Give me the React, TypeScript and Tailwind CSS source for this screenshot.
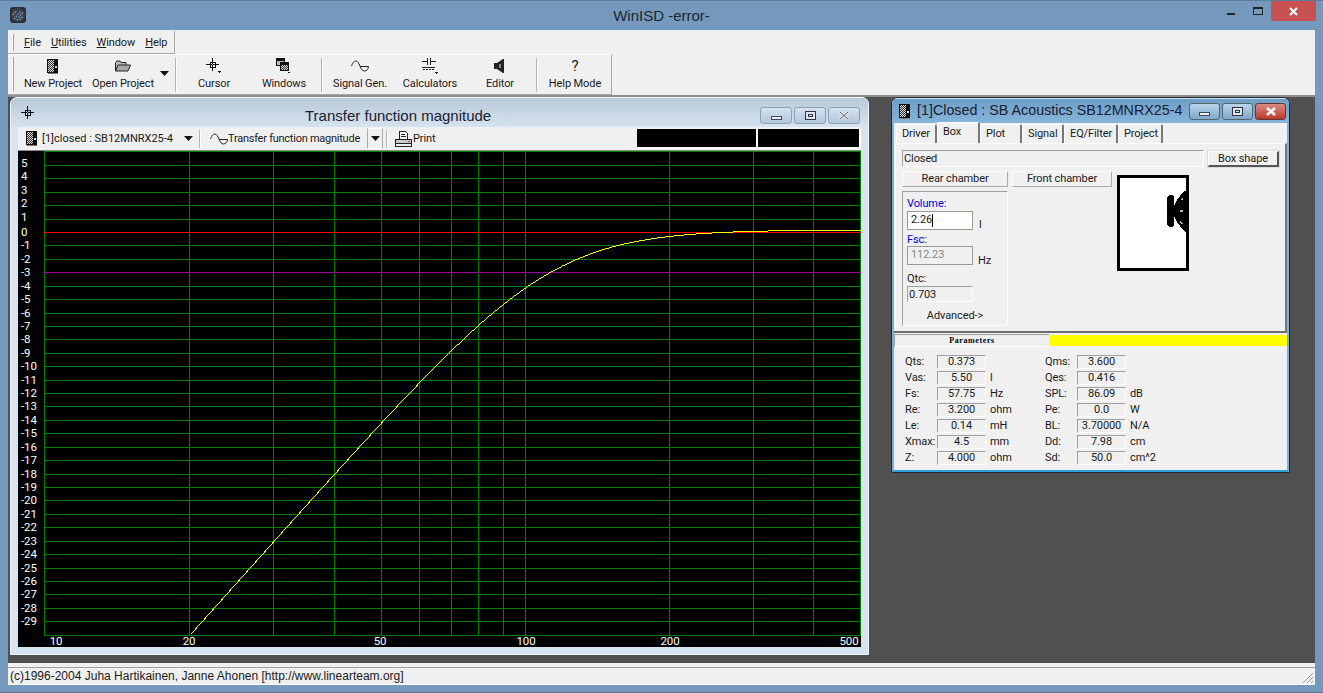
import React from "react";

const Dither = ({ id }: { id: string }) => (
  <pattern id={id} width="2" height="2" patternUnits="userSpaceOnUse">
    <rect width="2" height="2" fill="#d8d8d8" />
    <rect width="1" height="1" fill="#333" />
    <rect x="1" y="1" width="1" height="1" fill="#333" />
  </pattern>
);

const BoxIcon = ({ id }: { id: string }) => (
  <svg width="12" height="15" viewBox="0 0 12 15" shapeRendering="crispEdges">
    <defs><Dither id={id} /></defs>
    <rect x="0.5" y="0.5" width="10" height="13" fill={`url(#${id})`} stroke="#111" />
    <rect x="7" y="1" width="4" height="12" fill="#111" />
    <rect x="8" y="7" width="2" height="2" fill="#ddd" />
    <rect x="1" y="14" width="10" height="1" fill="#777" />
  </svg>
);

const FolderIcon = () => (
  <svg width="16" height="12" viewBox="0 0 16 12">
    <path d="M.5 11V2.500L2 1h3l1 1.500h5V5" fill="#bbb" stroke="#222" />
    <path d="M.5 11 3 5h12.500L13 11z" fill="#a9a9a9" stroke="#222" />
  </svg>
);

const Crosshair = ({ arrow }: { arrow?: boolean }) => (
  <svg width="16" height="16" viewBox="0 0 16 16" shapeRendering="crispEdges">
    <rect x="0" y="6" width="13" height="1" fill="#111" />
    <rect x="6" y="0" width="1" height="13" fill="#111" />
    <rect x="4" y="4" width="5" height="5" fill="none" stroke="#111" />
    <rect x="6" y="6" width="1" height="1" fill="#888" />
    {arrow && <path d="M11 13h4l-2 2z" fill="#111" />}
  </svg>
);

const WindowsIcon = () => (
  <svg width="16" height="16" viewBox="0 0 16 16" shapeRendering="crispEdges">
    <defs><Dither id="wd" /></defs>
    <rect x="0.5" y="0.5" width="8" height="7" fill="#bbb" stroke="#111" />
    <rect x="0.5" y="0.5" width="8" height="2" fill="#111" />
    <rect x="4.5" y="4.5" width="8" height="8" fill="url(#wd)" stroke="#111" />
    <rect x="4.5" y="4.5" width="8" height="2" fill="#111" />
    <path d="M11 14h3l-1.500 1.500z" fill="#111" />
  </svg>
);

const SineIcon = () => (
  <svg width="18" height="12" viewBox="0 0 18 12" fill="none" stroke="#222">
    <path d="M.5 6C2 2 3.500 1 5 1s2.500 2 4 5" />
    <path d="M9 6c1 3 2.500 5 4.500 5s4-2 4-4.500H9" />
  </svg>
);

const CalcIcon = () => (
  <svg width="16" height="16" viewBox="0 0 16 16" shapeRendering="crispEdges" fill="#222">
    <rect x="0" y="3" width="5" height="1" />
    <rect x="5" y="0" width="1" height="7" />
    <rect x="8" y="0" width="1" height="7" />
    <rect x="9" y="3" width="5" height="1" />
    <rect x="0" y="9" width="13" height="1" />
    <rect x="1" y="11" width="2" height="1" /><rect x="4" y="11" width="2" height="1" /><rect x="7" y="11" width="2" height="1" /><rect x="10" y="11" width="2" height="1" />
    <path d="M12 14h4l-2 2z" />
  </svg>
);

const EditorIcon = () => (
  <svg width="12" height="14" viewBox="0 0 12 14">
    <path d="M0 4h3V10H0z" fill="#222" />
    <path d="M3 4 9 0v14L3 10z" fill="#222" />
    <path d="M5 5h2v4H5z" fill="#888" />
    <path d="M9.500 0v14" stroke="#222" />
  </svg>
);

const ToolBtn = ({ icon, label }: { icon: React.ReactNode; label: string }) => (
  <div className="w-[70px] h-full flex flex-col items-center pt-[3px] shrink-0">
    <div className="h-[16px] flex items-center justify-center">{icon}</div>
    <span className="mt-[3px] whitespace-nowrap leading-[14px]">{label}</span>
  </div>
);

const Sep = () => <div className="w-[2px] h-[34px] mt-[3px] bg-[#b4b4b4] border-r border-white shrink-0" />;

const Arrow = ({ w = 9 }: { w?: number }) => (
  <svg width={w} height="5" viewBox="0 0 9 5"><path d="M0 0h9L4.500 5z" fill="#111" /></svg>
);

const Wbtn = ({ children }: { children: React.ReactNode }) => (
  <div className="w-[32px] h-[17px] flex items-center justify-center rounded-[3px] border border-[#8ba0b6] bg-gradient-to-b from-[#d6e2ee] to-[#b2c6da]">
    {children}
  </div>
);

const MinG = () => <div className="w-[11px] h-[4px] mt-[5px] bg-[#eef2f6] border border-[#445]" />;
const MaxG = () => (
  <div className="w-[11px] h-[9px] border border-[#334] flex items-center justify-center bg-[#dde6ee]">
    <div className="w-[5px] h-[3px] border border-[#334]" />
  </div>
);
const CloseG = ({ light }: { light?: boolean }) => (
  <svg width="12" height="9" viewBox="0 0 12 9">
    <path d="M2 1l8 7M10 1 2 8" stroke={light ? "#fff" : "#e8eef4"} strokeWidth="2.400" />
    {!light && <path d="M2 1l8 7M10 1 2 8" stroke="#556" strokeWidth="1" />}
  </svg>
);

const db2y = (db: number) => 232 - 13.42 * db;
const f2x = (f: number) => 190 + 479 * Math.log10(f / 20);

const curve = (() => {
  const pts: string[] = [];
  for (let x = 190; x <= 860; x += 1) {
    const f = 20 * Math.pow(10, (x - 190) / 479);
    const r = (f / 112.23) ** 2;
    const h = r / Math.sqrt((1 - r) ** 2 + r / (0.703 * 0.703));
    const offset = (0.2 * r * r) / (r * r + 4);
    const db = 20 * Math.log10(h) + offset;
    pts.push(`${x}.5,${Math.round(db2y(db))}.5`);
  }
  return pts.join(" ");
})();

const Chart = () => {
  const rows: number[] = [];
  for (let i = 6; i >= -30; i--) rows.push(i);
  const brightV = [40, 50, 60, 70, 80, 90, 200, 300, 400];
  const dullV = [189.5, 273.5, 525.5];
  return (
    <svg width="843" height="496" viewBox="18 151 843 496" className="block bg-black">
      <g shapeRendering="crispEdges">
        {rows.map((r) => (
          <line key={r} x1="44" x2="862" y1={Math.round(db2y(r)) + 0.5} y2={Math.round(db2y(r)) + 0.5} stroke="#008000" />
        ))}
        <line x1="44.500" x2="44.500" y1="152" y2="635" stroke="#008000" />
        <line x1="860.500" x2="860.500" y1="152" y2="635" stroke="#008000" />
        {brightV.map((f) => (
          <line key={f} x1={Math.round(f2x(f)) + 0.5} x2={Math.round(f2x(f)) + 0.5} y1="152" y2="635" stroke="#008000" />
        ))}
        {dullV.map((x) => (
          <line key={x} x1={x} x2={x} y1="152" y2="635" stroke="#2a6a2a" />
        ))}
        <line x1="44" x2="861" y1="232.500" y2="232.500" stroke="#ff0000" />
        <line x1="44" x2="861" y1="272.500" y2="272.500" stroke="#9a009a" />
        <polyline points={curve} fill="none" stroke="#ffff00" strokeWidth="1" />
      </g>
      <g fill="#fff" fontSize="11.500" fontFamily="Roboto, sans-serif">
        {rows.slice(1, -1).map((r) => (
          <text key={r} x="21" y={db2y(r) + (r > 0 ? 2 : 4)}>{r}</text>
        ))}
        {[[10, 56], [20, 189], [50, 380], [100, 526], [200, 670], [500, 849]].map(([l, x]) => (
          <text key={l} x={x} y="645" textAnchor="middle">{l}</text>
        ))}
      </g>
    </svg>
  );
};

const Plot = () => (
  <div className="absolute left-[2px] top-0 w-[859px] h-[558px] rounded-t-[7px] border border-[#eef3f8] bg-[#d6e3f0] flex flex-col overflow-hidden">
    <div className="h-[29px] shrink-0 flex items-center bg-gradient-to-b from-[#b8c9d9] to-[#d6e3f0] relative pl-[10px] pr-[8px]">
      <div className="mt-[3px]"><Crosshair /></div>
      <span className="absolute left-[294px] top-[9px] text-[15px] tracking-normal leading-[18px] text-[#1c2030] whitespace-nowrap font-['Liberation_Sans',sans-serif]">Transfer function magnitude</span>
      <div className="ml-auto flex gap-[2px] mt-[5px]">
        <Wbtn><MinG /></Wbtn>
        <Wbtn><MaxG /></Wbtn>
        <Wbtn><CloseG /></Wbtn>
      </div>
    </div>
    <div className="mx-[7px] h-[24px] shrink-0 bg-[#f0f0f0] flex items-center border-b border-[#8a8a8a]">
      <div className="ml-[8px] flex"><BoxIcon id="bi1" /></div>
      <span className="ml-[4px] mt-[2px] w-[131px] whitespace-nowrap tracking-[0px]">[1]closed : SB12MNRX25-4</span>
      <div className="ml-[11px] flex"><Arrow /></div>
      <div className="ml-[6px] w-[2px] h-[18px] bg-[#b4b4b4] border-r border-white" />
      <div className="ml-[9px] flex"><SineIcon /></div>
      <span className="mt-[2px] w-[132px] whitespace-nowrap tracking-[-0.25px]">Transfer function magnitude</span>
      <div className="ml-[7px] w-[16px] h-[21px] flex items-center justify-center border border-[#aaa] border-b-white border-t-white"><Arrow /></div>
      <div className="ml-[3px] w-[2px] h-[18px] bg-[#b4b4b4] border-r border-white" />
      <svg className="ml-[7px]" width="17" height="16" viewBox="0 0 17 16" shapeRendering="crispEdges">
        <path d="M4.500.5h6l2 2v6h-8z" fill="#fff" stroke="#222" />
        <path d="M.5 8.500h16v4h-16z" fill="#ccc" stroke="#222" />
        <path d="M.5 12.500h16v3h-16z" fill="#eee" stroke="#222" />
        <path d="M6 3h4M6 5h5" stroke="#222" />
        <rect x="13" y="10" width="2" height="1" fill="#d33" />
      </svg>
      <span className="ml-[1px] mt-[2px]">Print</span>
      <div className="ml-auto flex h-[20px] gap-[2px] bg-white border-r-2 border-b-2 border-white">
        <div className="w-[119px] bg-black" />
        <div className="w-[101px] bg-black" />
      </div>
    </div>
    <div className="mx-[7px]"><Chart /></div>
  </div>
);

const Sunken = ({ w, h, children, center, className = "" }: { w: number | string; h: number; children: React.ReactNode; center?: boolean; className?: string }) => (
  <div
    style={{ width: w, height: h }}
    className={`border-t border-l border-[#a0a0a0] border-b-white border-r-white border-b border-r flex items-center leading-none whitespace-nowrap ${center ? "justify-center" : "pl-[1px]"} ${className}`}
  >
    {children}
  </div>
);

const Param = ({ l, v, u, lw = 32 }: { l: string; v: string; u?: string; lw?: number }) => (
  <div className="h-[16px] flex items-center">
    <span style={{ width: lw }} className="shrink-0">{l}</span>
    <Sunken w={49} h={14} center className="-mt-[1px]">{v}</Sunken>
    <span className="ml-[4px] whitespace-nowrap">{u}</span>
  </div>
);

const Tab = ({ t, w, active }: { t: string; w: number; active?: boolean }) => (
  <div
    style={{ width: w }}
    className={
      active
        ? "h-[21px] pl-[5px] pt-[2px] leading-[14px] bg-[#f0f0f0] border-t border-l border-white border-r-2 border-r-[#777] rounded-t-[2px] relative z-10 shrink-0"
        : "h-[19px] pl-[5px] pt-[2px] leading-[14px] bg-[#f0f0f0] border-t border-l border-white border-r-2 border-r-[#777] rounded-t-[2px] shrink-0"
    }
  >
    {t}
  </div>
);

const Flat = ({ w, children, className = "" }: { w: number; children: React.ReactNode; className?: string }) => (
  <div style={{ width: w }} className={`h-[16px] flex items-center justify-center border-t border-l border-white border-r border-b border-r-[#aaa] border-b-[#aaa] ${className}`}>
    {children}
  </div>
);

const Driver = () => (
  <div className="absolute left-[883px] top-0 w-[399px] h-[376px] rounded-t-[7px] border border-[#1d2a35] bg-[#f0f0f0] flex flex-col overflow-hidden">
    <div className="h-[25px] shrink-0 bg-gradient-to-b from-[#6d9ec6] to-[#86b5da] flex items-center pl-[7px] pr-[3px] border-t border-[#cfe0ee]">
      <BoxIcon id="bi2" />
      <span className="ml-[6px] -mt-[2px] text-[14.300px] tracking-normal text-[#1c2030] whitespace-nowrap leading-none font-['Liberation_Sans',sans-serif]">[1]Closed : SB Acoustics SB12MNRX25-4</span>
      <div className="ml-auto flex gap-[2px]">
        <div className="w-[31px] h-[17px] flex items-center justify-center rounded-[3px] border border-[#566] bg-gradient-to-b from-[#b9d4ea] to-[#7fa9cc]"><MinG /></div>
        <div className="w-[31px] h-[17px] flex items-center justify-center rounded-[3px] border border-[#566] bg-gradient-to-b from-[#b9d4ea] to-[#7fa9cc]"><MaxG /></div>
        <div className="w-[31px] h-[17px] flex items-center justify-center rounded-[3px] border border-[#633] bg-gradient-to-b from-[#d98a80] to-[#b8392c]"><CloseG light /></div>
      </div>
    </div>
    <div className="flex-1 flex flex-col border-x-2 border-x-[#7db0d8] border-b-2 border-b-[#2f9fd8]">
      <div className="h-[20px] flex items-end pl-[2px] shrink-0">
        <Tab t="Driver" w={41} />
        <Tab t="Box" w={43} active />
        <Tab t="Plot" w={42} />
        <Tab t="Signal" w={42} />
        <Tab t="EQ/Filter" w={54} />
        <Tab t="Project" w={45} />
      </div>
      <div className="h-[188px] ml-[1px] border-t border-l border-white border-r-2 border-r-[#777] px-[6px] pt-[6px] shrink-0">
        <div className="flex items-start gap-[4px]">
          <Sunken w={302} h={17}>Closed</Sunken>
          <div className="w-[71px] h-[16px] mt-[1px] pt-[2px] flex items-center justify-center border-t border-l border-white border-r-2 border-b-2 border-r-[#555] border-b-[#555] shadow-[0_0_0_1px_#ddd]">Box shape</div>
        </div>
        <div className="flex mt-[4px] gap-[4px]">
          <div className="w-[106px]">
            <Flat w={106}>Rear chamber</Flat>
            <div className="mt-[4px] w-[106px] h-[135px] border border-[#a0a0a0] border-r-white border-b-white pl-[4px] pt-[4px]">
              <div className="text-[#0000e0] h-[14px] leading-[16px]">Volume:</div>
              <div className="flex items-end">
                <div className="w-[66px] h-[19px] mt-[1px] bg-white border border-[#a0988a] pl-[3px] flex items-center">2.26<span className="w-px h-[13px] bg-black" /></div>
                <span className="ml-[6px] mb-[-3px]">l</span>
              </div>
              <div className="text-[#0000e0] h-[14px] leading-[16px] mt-[2px]">Fsc:</div>
              <div className="flex items-end">
                <div className="w-[66px] h-[19px] bg-[#f0f0f0] border border-[#a0988a] pl-[3px] flex items-center text-[#888]">112.23</div>
                <span className="ml-[5px] mb-[-4px]">Hz</span>
              </div>
              <div className="h-[14px] leading-[16px] mt-[6px]">Qtc:</div>
              <Sunken w={66} h={16} className="mt-[1px]">0.703</Sunken>
              <div className="text-center w-[96px] mt-[6px]">Advanced-&gt;</div>
            </div>
          </div>
          <Flat w={100}>Front chamber</Flat>
          <svg className="ml-[1px] mt-[4px]" width="72" height="96" viewBox="0 0 72 96" shapeRendering="crispEdges">
            <rect x="1.500" y="1.500" width="69" height="93" fill="#fff" stroke="#000" strokeWidth="3" />
            <path d="M70 15l-4 2-6 8-3 6v10l3 6 6 8 4 3z" fill="#000" />
            <path d="M52 20h3l2 2v28l-2 2h-3l-2-2V22z" fill="#000" />
            <path d="M63 25l3-2v2zM63 35h3v2h-3zM63 46l2 1 1 2h-2z" fill="#bbb" />
          </svg>
        </div>
      </div>
      <div className="h-[2px] bg-[#6e6e6e] shrink-0" />
      <div className="flex items-center mt-[1px] h-[13px] shrink-0">
        <div className="w-[155px] h-[13px] border-t border-l border-[#a0a0a0] border-b border-b-white flex items-center justify-center font-['Liberation_Serif'] font-bold text-[8px] tracking-[0.6px] text-black">Parameters</div>
        <div className="w-[238px] h-[11px] bg-[#ffff00]" />
      </div>
      <div className="flex pl-[11px] pt-[7px]">
        <div className="w-[140px]">
          <Param l="Qts:" v="0.373" />
          <Param l="Vas:" v="5.50" u="l" />
          <Param l="Fs:" v="57.75" u="Hz" />
          <Param l="Re:" v="3.200" u="ohm" />
          <Param l="Le:" v="0.14" u="mH" />
          <Param l="Xmax:" v="4.5" u="mm" />
          <Param l="Z:" v="4.000" u="ohm" />
        </div>
        <div>
          <Param l="Qms:" v="3.600" />
          <Param l="Qes:" v="0.416" />
          <Param l="SPL:" v="86.09" u="dB" />
          <Param l="Pe:" v="0.0" u="W" />
          <Param l="BL:" v="3.70000" u="N/A" />
          <Param l="Dd:" v="7.98" u="cm" />
          <Param l="Sd:" v="50.0" u="cm^2" />
        </div>
      </div>
    </div>
  </div>
);

export default function App() {
  return (
    <div className="w-[1323px] h-[693px] flex flex-col bg-[#7499bd] overflow-hidden font-['Roboto',sans-serif] text-[11px] tracking-[-0.1px] text-[#1a1a1a] border-t border-[#5d7d9d]">
      <div className="h-[29px] shrink-0 flex items-start relative font-['Liberation_Sans',sans-serif]">
        <div className="absolute left-[10px] top-[6px] w-[16px] h-[16px] rounded-[3px] bg-[#2b2e35] overflow-hidden">
          <svg width="16" height="16" viewBox="0 0 16 16">
            <circle cx="8" cy="8" r="7" fill="#3d4048" />
            <path d="M3 8l3-4M4 12l7-8M7 13l6-8M10 13l3-4" stroke="#7ab0e0" strokeWidth="1.200" strokeDasharray="1.500 1.200" />
          </svg>
        </div>
        <div className="absolute left-0 right-0 top-[6px] text-center text-[15px] tracking-normal leading-[18px] text-[#1c2530]">WinISD -error-</div>
        <div className="ml-auto flex items-start mr-[7px] h-[20px]">
          <div className="w-[24px] h-[20px] relative"><div className="absolute left-[1px] top-[12px] w-[8px] h-[2px] bg-[#222]" /></div>
          <div className="w-[21px] h-[20px] relative"><div className="absolute left-[3px] top-[6px] w-[10px] h-[8px] border border-[#222] border-t-2" /></div>
          <div className="w-[45px] h-[20px] bg-[#c75050] flex items-center justify-center">
            <svg width="9" height="9" viewBox="0 0 9 9"><path d="M1 1l7 7M8 1 1 8" stroke="#fff" strokeWidth="2" /></svg>
          </div>
        </div>
      </div>
      <div className="mx-[8px] flex-1 flex flex-col min-h-0 border-t border-[#e8eef4] bg-[#f0f0f0]">
        <div className="h-[23px] flex shrink-0">
          <div className="w-[167px] h-[23px] border-r border-b border-[#a8a8a8] flex items-center relative">
            <div className="w-[2px] h-[17px] ml-[4px] bg-white border-r border-[#a0a0a0]" />
            <div className="flex ml-[10px] gap-[10px] pt-[3px]">
              <span><u>F</u>ile</span>
              <span><u>U</u>tilities</span>
              <span><u>W</u>indow</span>
              <span><u>H</u>elp</span>
            </div>
          </div>
        </div>
        <div className="h-[41px] w-[604px] flex shrink-0 border-t border-white border-r border-r-[#a8a8a8] border-b border-b-[#a8a8a8]">
          <div className="w-[2px] h-[34px] mt-[2px] ml-[4px] mr-[4px] bg-white border-r border-[#a0a0a0] shrink-0" />
          <ToolBtn icon={<BoxIcon id="bi3" />} label="New Project" />
          <ToolBtn icon={<FolderIcon />} label="Open Project" />
          <div className="w-[17px] pt-[16px] pl-[2px] shrink-0"><Arrow /></div>
          <Sep />
          <div className="w-[2px] shrink-0" />
          <ToolBtn icon={<Crosshair arrow />} label="Cursor" />
          <ToolBtn icon={<WindowsIcon />} label="Windows" />
          <div className="w-[2px] shrink-0" />
          <Sep />
          <div className="w-[2px] shrink-0" />
          <ToolBtn icon={<SineIcon />} label="Signal Gen." />
          <ToolBtn icon={<CalcIcon />} label="Calculators" />
          <ToolBtn icon={<EditorIcon />} label="Editor" />
          <div className="w-[1px] shrink-0" />
          <Sep />
          <div className="w-[2px] shrink-0" />
          <ToolBtn icon={<span className="text-[15px] leading-none">?</span>} label="Help Mode" />
        </div>
        <div className="h-[568px] relative bg-[#505050] border-t-2 border-t-[#8e8e8e] shrink-0">
          <Plot />
          <Driver />
        </div>
        <div className="flex-1 min-h-0 border-t-4 border-t-[#f0f0f0] relative">
          <div className="border-t border-[#a0a0a0] h-full pl-[2px] pt-[1px] border-b border-b-white text-[12px] tracking-normal leading-[15px] flex items-center font-['Liberation_Sans',sans-serif]">
            (c)1996-2004 Juha Hartikainen, Janne Ahonen [http://www.linearteam.org]
          </div>
          <svg className="absolute right-[1px] bottom-[1px]" width="12" height="12" viewBox="0 0 12 12" stroke="#999">
            <path d="M11 1 1 11M11 5l-6 6M11 9l-2 2" />
          </svg>
        </div>
      </div>
      <div className="h-[8px] shrink-0 border-b border-[#5d7d9d]" />
    </div>
  );
}
